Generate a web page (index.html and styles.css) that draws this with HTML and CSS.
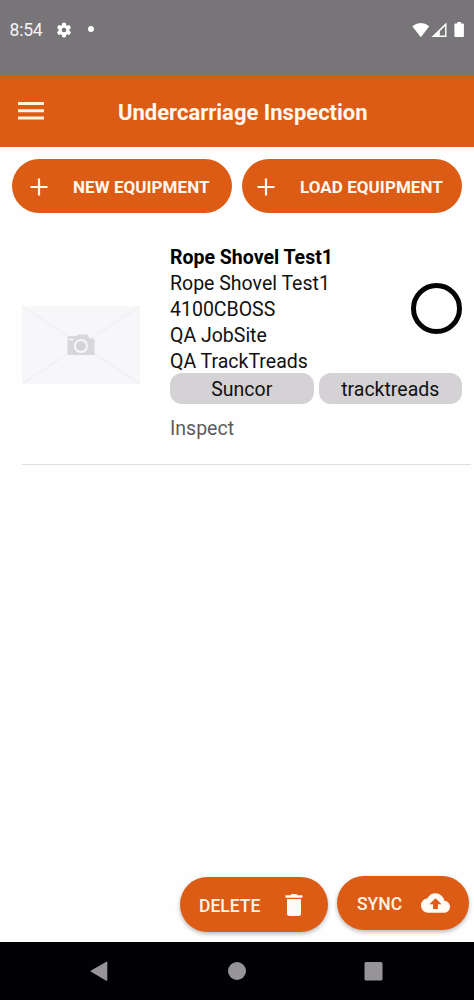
FILE: index.html
```html
<!DOCTYPE html>
<html lang="en">
<head>
<meta charset="utf-8">
<title>Undercarriage Inspection</title>
<link rel="stylesheet" href="styles.css">
</head>
<body>
<div class="screen">
  <div class="status">
    <span class="time">8:54</span>
    <svg class="gear" width="18" height="18" viewBox="0 0 24 24"><path fill="#fff" d="M19.14 12.94c.04-.3.06-.61.06-.94 0-.32-.02-.64-.07-.94l2.03-1.58a.49.49 0 0 0 .12-.61l-1.92-3.32a.49.49 0 0 0-.59-.22l-2.39.96c-.5-.38-1.03-.7-1.62-.94l-.36-2.54a.48.48 0 0 0-.48-.41h-3.84c-.24 0-.43.17-.47.41l-.36 2.54c-.59.24-1.13.57-1.62.94l-2.39-.96c-.22-.08-.47 0-.59.22L2.74 8.87c-.12.21-.08.47.12.61l2.03 1.58c-.05.3-.09.63-.09.94s.02.64.07.94l-2.03 1.58a.49.49 0 0 0-.12.61l1.92 3.32c.12.22.37.29.59.22l2.39-.96c.5.38 1.03.7 1.62.94l.36 2.54c.05.24.24.41.48.41h3.84c.24 0 .44-.17.47-.41l.36-2.54c.59-.24 1.13-.56 1.62-.94l2.39.96c.22.08.47 0 .59-.22l1.92-3.32c.12-.22.07-.47-.12-.61l-2.01-1.58zM12 15.1a3.1 3.1 0 1 1 0-6.2 3.1 3.1 0 0 1 0 6.2z"/></svg>
    <span class="dot"></span>
    <svg class="signals" width="54" height="18" viewBox="0 0 54 18"><g fill="#fff"><path d="M0.300 5.200Q8.800-1 17.300 5.200L8.800 16.200z"/><path fill-rule="evenodd" d="M34.500 1.500V16H19.500zM33.100 5V14.600H27.800V10.200z"/><path d="M43.300 2.500h2V1h3.700v1.500h2q.9 0 .9.9v11.700q0 .9-.9.9h-7.700q-.9 0-.9-.9V3.400q0-.9.9-.9z"/></g></svg>
  </div>
  <header class="header">
    <svg class="menu" width="26" height="18" viewBox="0 0 26 18"><path fill="#fff4df" d="M0 0h26v3H0zM0 7.300h26v3H0zM0 14.600h26v3H0z"/></svg>
    <h1 class="title">Undercarriage Inspection</h1>
  </header>
  <main class="content">
    <div class="actions">
      <button class="button"><svg width="18" height="18" viewBox="0 0 18 18"><path d="M9 .5v17M.5 9h17" stroke="#fffaf0" stroke-width="2.200"/></svg><span>NEW EQUIPMENT</span></button>
      <button class="button"><svg width="18" height="18" viewBox="0 0 18 18"><path d="M9 .5v17M.5 9h17" stroke="#fffaf0" stroke-width="2.200"/></svg><span>LOAD EQUIPMENT</span></button>
    </div>
    <article class="item">
      <svg class="thumb" width="118" height="78" viewBox="0 0 118 78">
        <path fill="#f7f6f9" d="M0 0h118v78H0z"/>
        <path d="M0 0l118 78M118 0L0 78" stroke="#f1f0f2" stroke-width="1.500"/>
        <path fill="#d8d7da" d="M45.500 31.500q0-1.500 1.500-1.500h7l2.500-1.500h8.500l3 4h3q1.500 0 1.500 1.500v13.500q0 1.500-1.500 1.500h-24q-1.500 0-1.500-1.500z"/>
        <circle cx="59" cy="40" r="6" fill="#d4d3d6" stroke="#f8f7fa" stroke-width="2"/>
        <path d="M46.500 33.500h5" stroke="#f8f7fa" stroke-width="1.500"/>
      </svg>
      <div class="details">
        <div class="summary">
          <div class="lines">
            <div class="name">Rope Shovel Test1</div>
            <div>Rope Shovel Test1</div>
            <div>4100CBOSS</div>
            <div>QA JobSite</div>
            <div>QA TrackTreads</div>
          </div>
          <span class="ring"></span>
        </div>
        <div class="chips"><span class="chip">Suncor</span><span class="chip">tracktreads</span></div>
        <div class="inspect">Inspect</div>
      </div>
    </article>
    <div class="floating">
      <button class="fab delete"><span>DELETE</span><svg width="18" height="22" viewBox="0 0 18 22"><path fill="#fffaf4" d="M.5 1.200h5L6.500 0h5l1 1.200h5v2.500H.500zM2 5h14v14.500q0 2.500-2.500 2.500h-9Q2 22 2 19.500z"/></svg></button>
      <button class="fab sync"><span>SYNC</span><svg width="29" height="20" viewBox="0 0 24 16"><path fill="#fffaf4" d="M19.350 6.040A7.490 7.490 0 0 0 12 0C9.110 0 6.600 1.640 5.350 4.040A5.994 5.994 0 0 0 0 10c0 3.310 2.690 6 6 6h13c2.760 0 5-2.240 5-5 0-2.640-2.050-4.780-4.650-4.960zM14 9v4h-4V9H7l5-5 5 5h-3z"/></svg></button>
    </div>
  </main>
  <nav class="nav">
    <svg width="474" height="58" viewBox="0 0 474 58"><g fill="#969498"><path d="M91 28.500Q90.300 29.200 91 29.800L106.300 38.700Q107.300 39 107.300 38V20.300Q107.300 19.300 106.300 19.800z"/><circle cx="237" cy="29" r="9"/><rect x="364.500" y="20" width="18" height="18.500" rx="1.500"/></g></svg>
  </nav>
</div>
</body>
</html>
```
FILE: styles.css
```css
* { box-sizing: border-box; }
body { margin: 0; font-family: Roboto, "Liberation Sans", sans-serif; background: #fefefe; }
svg { display: block; flex: none; }
.screen { width: 474px; height: 1000px; display: flex; flex-direction: column; overflow: hidden; }
.status { height: 74.5px; flex: none; background: #787579; display: flex; align-items: flex-start; padding: 20px 8px 0 9.5px; color: #f4f3f5; }
.time { width: 45.5px; font-size: 17.500px; line-height: 21px; letter-spacing: -0.2px; }
.gear { margin-top: 1px; }
.dot { width: 6px; height: 6px; border-radius: 50%; background: #fff; margin: 6px 0 0 15px; }
.signals { margin: 1px 0 0 auto; }
.header { height: 72.5px; flex: none; background: #dc5c16; display: flex; align-items: center; padding-left: 18px; }
.menu { margin-top: 1px; }
.title { margin: 4px 0 0 74px; font-size: 22px; line-height: 28px; font-weight: 700; color: #fff8ee; white-space: nowrap; }
.content { flex: 1; display: flex; flex-direction: column; padding-top: 12px; }
.actions { display: flex; gap: 10px; padding: 0 12px; }
.button { width: 220px; height: 54px; padding: 0 0 0 18px; border: 0; border-radius: 27px; background: #dc5c16; color: #fff8ee; display: flex; align-items: center; gap: 25px; font: 700 17px/24px Roboto, sans-serif; letter-spacing: 0.06px; white-space: nowrap; }
.button span { margin-top: 2px; }
.button svg { margin-top: 1px; }
.button:nth-child(2) { padding-left: 15px; }
.item { margin: 31px 3px 0 22px; height: 221px; border-bottom: 1px solid #dfdfdf; display: flex; gap: 30px; }
.thumb { margin-top: 62px; }
.details { width: 292px; color: #111; font-size: 19.500px; line-height: 26px; }
.summary { display: flex; justify-content: space-between; align-items: flex-start; height: 129px; }
.lines { padding-top: 1px; white-space: nowrap; }
.name { font-weight: 700; color: #000; }
.ring { width: 51px; height: 51px; border: 5px solid #050505; border-radius: 50%; margin-top: 39px; }
.chips { display: flex; gap: 5px; }
.chip { flex: 1; height: 31px; padding-top: 4px; border-radius: 12px; background: #d4d2d5; text-align: center; }
.inspect { margin-top: 12px; color: #5c5c5c; }
.floating { margin-top: auto; padding: 0 5px 10px 0; display: flex; justify-content: flex-end; gap: 9px; }
.fab { border: 0; border-radius: 28px; background: #dc5c16; color: #fff3e5; display: flex; align-items: center; justify-content: space-between; font: 500 17.500px/24px Roboto, sans-serif; box-shadow: 0 2px 4px rgba(0,0,0,.28); }
.delete { width: 148px; height: 55px; padding: 0 25px 0 19px; margin-top: 1px; }
.sync { width: 132px; height: 54px; padding: 0 19px 0 20px; }
.fab span { margin-top: 2px; }
.nav { height: 58px; flex: none; background: #020104; }
```
